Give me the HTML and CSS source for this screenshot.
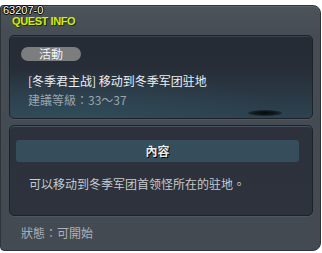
FILE: index.html
```html
<!DOCTYPE html>
<html lang="zh-Hant">
<head>
    <meta charset="UTF-8">
    <meta name="viewport" content="width=device-width, initial-scale=1.0">
    <title>Quest Info</title>
    <link rel="stylesheet" href="styles.css">
</head>
<body>

    <!-- Ventana de información de misión -->
    <div class="tooltip">
        <div class="quest-head">
            <div class="quest-id">63207-0</div>
            <div class="quest-label">QUEST INFO</div>
        </div>

        <!-- Resumen -->
        <div class="card card-summary">
            <span class="tag">活動</span>
            <p class="quest-title">[冬季君主战] 移动到冬季军团驻地</p>
            <p class="quest-level">建議等級：33～37</p>
            <div class="shadow-spot"></div>
        </div>

        <!-- Detalle -->
        <div class="card card-detail">
            <div class="detail-head">內容</div>
            <p class="detail-text">可以移动到冬季军团首领怪所在的驻地。</p>
        </div>

        <p class="quest-status">狀態：可開始</p>
    </div>

</body>
</html>
```

FILE: styles.css
```css
/* Estilos generales */
body {
    margin: 0;
    padding: 0;
    background-color: #ffffff;
    font-family: "Noto Sans CJK TC", "Liberation Sans", sans-serif;
}

p {
    margin: 0;
}

/* Ventana principal */
.tooltip {
    box-sizing: border-box;
    width: 321px;
    height: 246px;
    margin-top: 5px;
    padding: 0 7px 0 8px;
    background: linear-gradient(to bottom, #4b535b 0%, #454c54 12%, #434a52 100%);
    border: 1px solid #2f343a;
    border-radius: 3px 8px 8px 4px;
    box-shadow: inset 0 1px 0 #5d656d;
}

.quest-head {
    height: 20px;
    font-family: "Liberation Sans", sans-serif;
}

.quest-id {
    margin-left: -6px;
    height: 10px;
    font-size: 11px;
    line-height: 9px;
    color: #ffffff;
    text-shadow: -1px 0 0 #000, 1px 0 0 #000, 0 -1px 0 #000, 0 1px 0 #000;
}

.quest-label {
    margin-left: 3px;
    height: 10px;
    font-size: 11px;
    font-weight: bold;
    line-height: 11px;
    letter-spacing: -0.4px;
    color: #d4ee00;
    text-shadow: 1px 1px 0 #1a1d10;
}

/* Tarjetas */
.card {
    position: relative;
    box-sizing: border-box;
    width: 304px;
    border: 1px solid #1d2229;
    border-radius: 5px;
}

.card-summary {
    height: 84px;
    margin-top: 9px;
    padding: 11px 0 0 11px;
    background:
        radial-gradient(ellipse 70% 60% at 20% 100%, rgba(52, 84, 98, 0.55), rgba(52, 84, 98, 0)),
        linear-gradient(to bottom, #262b35 0%, #272e38 40%, #2d4250 100%);
    box-shadow: inset 0 1px 0 #39424d, 0 1px 0 #4d5862;
}

.tag {
    display: block;
    width: 60px;
    height: 14px;
    border-radius: 7px;
    background-color: #7b7d7f;
    color: #f2f2f2;
    font-size: 12px;
    line-height: 14px;
    text-align: center;
}

.quest-title {
    margin: 12px 0 0 7px;
    font-size: 12px;
    line-height: 16px;
    color: #eceff1;
}

.quest-level {
    margin: 3px 0 0 7px;
    font-size: 12px;
    line-height: 16px;
    color: #9ba5ad;
}

.shadow-spot {
    position: absolute;
    right: 30px;
    top: 74px;
    width: 34px;
    height: 6px;
    border-radius: 50%;
    background: radial-gradient(ellipse at center, #05080a 0%, rgba(5, 8, 10, 0.7) 45%, rgba(5, 8, 10, 0) 100%);
}

.card-detail {
    height: 91px;
    margin-top: 6px;
    padding: 14px 13px 0 6px;
    background: linear-gradient(to bottom, #2c313b 0%, #2d323c 100%);
    box-shadow: inset 0 1px 0 #47525e, 0 1px 0 #4d5560;
}

.detail-head {
    height: 22px;
    border-radius: 3px;
    background-color: #364e5b;
    color: #e8ecee;
    font-size: 12px;
    font-weight: bold;
    line-height: 22px;
    text-align: center;
    text-shadow: 1px 1px 0 #000;
}

.detail-text {
    margin: 14px 0 0 13px;
    font-size: 12px;
    line-height: 16px;
    color: #c5cace;
}

.quest-status {
    margin: 9px 0 0 12px;
    font-size: 12px;
    line-height: 16px;
    color: #aab2b9;
}
```
